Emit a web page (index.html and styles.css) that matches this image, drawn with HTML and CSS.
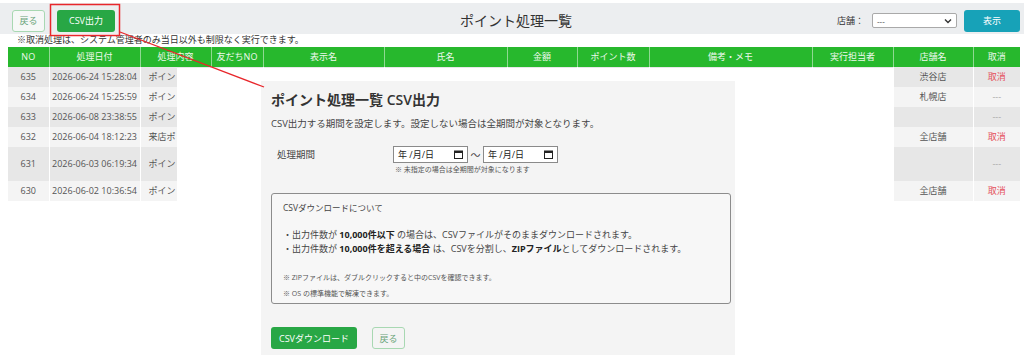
FILE: index.html
```html
<!DOCTYPE html>
<html>
<head>
<title>ポイント処理一覧</title>
<link rel="stylesheet" href="styles.css">
</head>
<body>

<div class="page">
  <div class="topbar">
    <div class="bar-left">
      <a class="btn btn-back">戻る</a>
      <a class="btn btn-green">CSV出力</a>
    </div>
    <h1 class="title">ポイント処理一覧</h1>
    <div class="bar-right">
      <span class="shop-label">店舗：</span>
      <div class="select">
        <span>---</span>
        <svg width="8" height="6" viewBox="0 0 8 6"><path d="M1 1.5 L4 4.5 L7 1.5" fill="none" stroke="#333" stroke-width="1.4"/></svg>
      </div>
      <a class="btn btn-show">表示</a>
    </div>
  </div>

  <p class="notice">※取消処理は、システム管理者のみ当日以外も制限なく実行できます。</p>

  <table class="list">
    <colgroup>
      <col class="w41"><col class="w91"><col class="w71"><col class="w52"><col class="w121"><col class="w123">
      <col class="w70"><col class="w72"><col class="w163"><col class="w81"><col class="w80"><col class="w47">
    </colgroup>
    <thead>
      <tr>
        <th>NO</th><th>処理日付</th><th>処理内容</th><th>友だちNO</th><th>表示名</th><th>氏名</th>
        <th>金額</th><th>ポイント数</th><th>備考・メモ</th><th>実行担当者</th><th>店舗名</th><th>取消</th>
      </tr>
    </thead>
    <!-- columns 処理内容..実行担当者 are hidden behind the dialog in this capture -->
    <tbody>
      <tr>
        <td>635</td><td>2026-06-24 15:28:04</td><td class="kind">ポイン</td><td></td><td></td><td></td>
        <td></td><td></td><td></td><td></td><td>渋谷店</td><td><span class="cancel">取消</span></td>
      </tr>
      <tr>
        <td>634</td><td>2026-06-24 15:25:59</td><td class="kind">ポイン</td><td></td><td></td><td></td>
        <td></td><td></td><td></td><td></td><td>札幌店</td><td><span class="none">---</span></td>
      </tr>
      <tr>
        <td>633</td><td>2026-06-08 23:38:55</td><td class="kind">ポイン</td><td></td><td></td><td></td>
        <td></td><td></td><td></td><td></td><td></td><td><span class="none">---</span></td>
      </tr>
      <tr>
        <td>632</td><td>2026-06-04 18:12:23</td><td class="kind">来店ポ</td><td></td><td></td><td></td>
        <td></td><td></td><td></td><td></td><td>全店舗</td><td><span class="cancel">取消</span></td>
      </tr>
      <tr class="tall">
        <td>631</td><td>2026-06-03 06:19:34</td><td class="kind">ポイン</td><td></td><td></td><td></td>
        <td></td><td></td><td></td><td></td><td></td><td><span class="none">---</span></td>
      </tr>
      <tr>
        <td>630</td><td>2026-06-02 10:36:54</td><td class="kind">ポイン</td><td></td><td></td><td></td>
        <td></td><td></td><td></td><td></td><td>全店舗</td><td><span class="cancel">取消</span></td>
      </tr>
    </tbody>
  </table>
</div>

<!-- blanked area behind the dialog -->
<div class="cover"></div>

<div class="modal">
  <h2 class="modal-title">ポイント処理一覧 CSV出力</h2>
  <p class="modal-desc">CSV出力する期間を設定します。設定しない場合は全期間が対象となります。</p>

  <div class="period">
    <span class="period-label">処理期間</span>
    <div class="period-field">
      <div class="dates">
        <div class="date">
          <span>年 /月/日</span>
          <svg width="9" height="9" viewBox="0 0 9 9"><rect x="0.5" y="1" width="8" height="7.5" fill="none" stroke="#222" stroke-width="1"/><rect x="0.5" y="1" width="8" height="2" fill="#222"/></svg>
        </div>
        <span class="tilde">〜</span>
        <div class="date">
          <span>年 /月/日</span>
          <svg width="9" height="9" viewBox="0 0 9 9"><rect x="0.5" y="1" width="8" height="7.5" fill="none" stroke="#222" stroke-width="1"/><rect x="0.5" y="1" width="8" height="2" fill="#222"/></svg>
        </div>
      </div>
      <p class="hint">※ 未指定の場合は全期間が対象になります</p>
    </div>
  </div>

  <div class="info">
    <p class="info-title">CSVダウンロードについて</p>
    <ul class="info-list">
      <li>・出力件数が <b>10,000件以下</b> の場合は、CSVファイルがそのままダウンロードされます。</li>
      <li>・出力件数が <b>10,000件を超える場合</b> は、CSVを分割し、<b>ZIPファイル</b>としてダウンロードされます。</li>
    </ul>
    <p class="info-note">※ ZIPファイルは、ダブルクリックすると中のCSVを確認できます。</p>
    <p class="info-note">※ OS の標準機能で解凍できます。</p>
  </div>

  <div class="modal-buttons">
    <a class="btn btn-green btn-dl">CSVダウンロード</a>
    <a class="btn btn-back btn-back2">戻る</a>
  </div>
</div>

<svg class="annot" width="1024" height="357">
  <rect x="50.5" y="4.5" width="69" height="31" fill="none" stroke="#e8262b" stroke-width="1.5"/>
  <line x1="120" y1="32" x2="264" y2="87" stroke="#e8262b" stroke-width="1.3"/>
</svg>

</body>
</html>
```

FILE: styles.css
```css
body {
    margin: 0;
    background-color: #ffffff;
    color: #444;
    font-family: "Open Sans", "Noto Sans CJK JP", sans-serif;
    position: relative;
    width: 1024px;
    height: 357px;
    overflow: hidden;
}
.topbar {
    margin-top: 3px;
    height: 27px;
    padding: 4px 4px 0 12px;
    background-color: #eceef0;
    display: grid;
    grid-template-columns: 1fr auto 1fr;
    align-items: center;
}
.bar-left {
    display: flex;
    gap: 12px;
}
.bar-right {
    display: flex;
    justify-content: flex-end;
    align-items: center;
}
.title {
    margin: 0;
    font-size: 14px;
    font-weight: normal;
    color: #333;
    line-height: 18px;
}
.btn {
    display: inline-flex;
    align-items: center;
    justify-content: center;
    height: 22px;
    box-sizing: border-box;
    border-radius: 3px;
    font-size: 9px;
    cursor: pointer;
}
.btn-back {
    width: 33px;
    border: 1px solid #a8d8b2;
    background-color: #f6f8f7;
    color: #6aa47a;
}
.btn-green {
    width: 58px;
    background-color: #28a745;
    color: #ffffff;
}
.btn-show {
    width: 56px;
    background-color: #17a2b8;
    color: #ffffff;
}
.shop-label {
    font-size: 9px;
    color: #333;
    margin-right: 8px;
}
.select {
    width: 85px;
    height: 15px;
    box-sizing: border-box;
    border: 1px solid #a9a9a9;
    border-radius: 2px;
    background-color: #ffffff;
    display: flex;
    align-items: center;
    justify-content: space-between;
    padding: 0 4px 0 4px;
    font-size: 8px;
    color: #333;
    margin-right: 7px;
}
.notice {
    margin: 0;
    padding-left: 17px;
    font-size: 9px;
    line-height: 12px;
    color: #333;
}
.list {
    margin: 1px 0 0 8px;
    width: 1012px;
    table-layout: fixed;
    border-collapse: collapse;
    font-size: 9px;
}
.w41 { width: 41px; }
.w91 { width: 91px; }
.w71 { width: 71px; }
.w52 { width: 52px; }
.w121 { width: 121px; }
.w123 { width: 123px; }
.w70 { width: 70px; }
.w72 { width: 72px; }
.w163 { width: 163px; }
.w81 { width: 81px; }
.w80 { width: 80px; }
.w47 { width: 47px; }
.list th {
    background-color: #27b82d;
    color: #eef9ee;
    font-weight: normal;
    height: 20px;
    padding: 0;
    border-left: 1px solid #8fd992;
    line-height: 12px;
}
.list th:first-child,
.list td:first-child {
    border-left: none;
}
.list td {
    text-align: center;
    padding: 4px 2px;
    line-height: 12px;
    height: 12px;
    color: #555;
    border-left: 1px solid #ffffff;
    white-space: nowrap;
    overflow: hidden;
}
.list td.kind {
    text-align: left;
    padding-left: 8px;
}
.list tbody tr:nth-child(odd) td {
    background-color: #e7e7e7;
}
.list tbody tr:nth-child(even) td {
    background-color: #f4f4f4;
}
.list tr.tall td {
    padding-top: 11px;
    padding-bottom: 11px;
}
.cancel {
    color: #e5505b;
}
.none {
    color: #aaa;
}
.cover {
    position: absolute;
    left: 177px;
    top: 68px;
    width: 716px;
    height: 134px;
    background-color: #ffffff;
}
.modal {
    position: absolute;
    left: 261px;
    top: 81px;
    width: 474px;
    height: 274px;
    box-sizing: border-box;
    padding: 10px 4px 0 10px;
    background-color: #f4f4f4;
}
.modal-title {
    margin: 0;
    font-size: 14px;
    font-weight: 600;
    line-height: 18px;
    color: #333;
}
.modal-desc {
    margin: 8px 0 0 0;
    font-size: 9.5px;
    line-height: 13px;
    color: #444;
}
.period {
    margin-top: 16px;
    display: flex;
    padding-left: 6px;
}
.period-label {
    width: 116px;
    font-size: 9.5px;
    line-height: 17px;
    color: #444;
}
.dates {
    display: flex;
    align-items: center;
}
.date {
    width: 75px;
    height: 17px;
    box-sizing: border-box;
    border: 1px solid #8a8a8a;
    background-color: #ffffff;
    display: flex;
    align-items: center;
    justify-content: space-between;
    padding: 0 4px 0 4px;
    font-size: 9px;
    color: #222;
}
.tilde {
    width: 15px;
    text-align: center;
    font-size: 10px;
    color: #444;
}
.hint {
    margin: 2px 0 0 2px;
    font-size: 7px;
    line-height: 9px;
    color: #555;
}
.info {
    margin-top: 19px;
    width: 460px;
    height: 111px;
    box-sizing: border-box;
    border: 1px solid #8c8c8c;
    border-radius: 3px;
    background-color: #f7f7f7;
    padding: 8px 10px 0 11px;
}
.info-title {
    margin: 0;
    font-size: 8.5px;
    line-height: 12px;
    color: #444;
}
.info-list {
    list-style: none;
    margin: 14px 0 0 0;
    padding: 0;
    font-size: 9px;
    line-height: 14px;
    color: #444;
}
.info-list b {
    color: #222;
}
.info-note {
    margin: 0;
    font-size: 7px;
    line-height: 16px;
    color: #555;
}
.info-list + .info-note {
    margin-top: 14px;
}
.modal-buttons {
    margin-top: 23px;
    display: flex;
    gap: 15px;
}
.btn-dl {
    width: 86px;
}
.btn-back2 {
    width: 33px;
    background-color: #f4f4f4;
}
.annot {
    position: absolute;
    left: 0;
    top: 0;
    pointer-events: none;
}
```
